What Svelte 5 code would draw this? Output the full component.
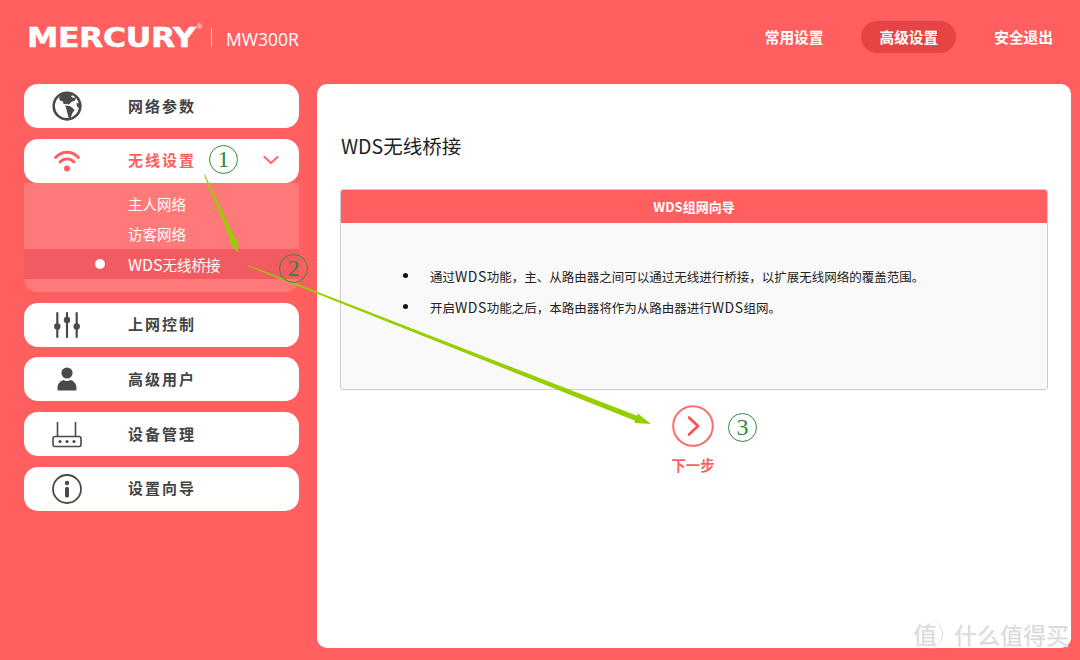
<script>
  const simple = [
    { label: '上网控制', icon: 'sliders' },
    { label: '高级用户', icon: 'user' },
    { label: '设备管理', icon: 'router' },
    { label: '设置向导', icon: 'info' }
  ];
</script>

{#snippet icon(name)}
  {#if name === 'globe'}
    <svg width="30" height="30" viewBox="0 0 32 32">
      <circle cx="16" cy="16" r="14.2" fill="#fff" stroke="#4a4a4a" stroke-width="2.8"/>
      <path d="M10 3.5 L15 2.5 L22 3 L20.5 6 L23 7.5 L26 6.5 L24.5 10 L21 11.5 L18 14.5 L15 13.5 L12.5 14 L11.5 11 L8.5 10 L7.5 7.5 Z" fill="#4a4a4a"/>
      <path d="M14 15.5 L19 16 L22 18 L24 20.5 L21.5 24 L20 28.5 L18 29 L16.5 24 L15.5 20 Z" fill="#4a4a4a"/>
      <path d="M26 13 L29 13 L29 18 L27 17 Z" fill="#4a4a4a"/>
    </svg>
  {:else if name === 'wifi'}
    <svg width="28" height="24" viewBox="0 0 28 24" fill="none" stroke="#ff5f5f" stroke-width="2.8" stroke-linecap="round">
      <path d="M2.5 8.5 C9 1.5 19 1.5 25.5 8.5"/>
      <path d="M7 13 C11 8.9 17 8.9 21 13"/>
      <circle cx="14" cy="19.5" r="3" fill="#ff5f5f" stroke="none"/>
    </svg>
  {:else if name === 'sliders'}
    <svg width="28" height="28" viewBox="0 0 28 28" fill="#4a4a4a">
      <rect x="3.2" y="1" width="2.2" height="26" rx="1"/>
      <rect x="12.9" y="1" width="2.2" height="26" rx="1"/>
      <rect x="22.6" y="1" width="2.2" height="26" rx="1"/>
      <circle cx="4.3" cy="15.5" r="3.2"/>
      <circle cx="14" cy="9" r="3.2"/>
      <circle cx="23.7" cy="15.5" r="3.2"/>
    </svg>
  {:else if name === 'user'}
    <svg width="20" height="24" viewBox="0 0 20 24" fill="#4a4a4a">
      <circle cx="10" cy="6" r="5.6"/>
      <path d="M0.5 22.5 C0.2 17 2.5 14.5 6.5 13 C8.5 14.4 11.5 14.4 13.5 13 C17.5 14.5 19.8 17 19.5 22.5 Q19.4 23.5 18.5 23.5 L1.5 23.5 Q0.6 23.5 0.5 22.5 Z"/>
    </svg>
  {:else if name === 'router'}
    <svg width="30" height="27" viewBox="0 0 30 27" fill="none" stroke="#4a4a4a" stroke-width="1.6">
      <path d="M5.5 1 V15.5 M23.5 1 V15.5"/>
      <rect x="1" y="15.5" width="28" height="10" rx="2"/>
      <circle cx="8" cy="20.5" r="1.6" fill="#4a4a4a" stroke="none"/>
      <circle cx="15" cy="20.5" r="1.6" fill="#4a4a4a" stroke="none"/>
      <circle cx="22" cy="20.5" r="1.6" fill="#4a4a4a" stroke="none"/>
    </svg>
  {:else if name === 'info'}
    <svg width="30" height="30" viewBox="0 0 30 30">
      <circle cx="15" cy="15" r="14" fill="none" stroke="#4a4a4a" stroke-width="1.8"/>
      <circle cx="15" cy="9" r="2.2" fill="#4a4a4a"/>
      <rect x="13" y="13" width="4" height="10.5" rx="1.6" fill="#4a4a4a"/>
    </svg>
  {/if}
{/snippet}

<div class="page">
  <header class="top">
    <div class="brand">
      <span class="logo">MERCURY</span>
      <span class="reg">®</span>
      <span class="sep"></span>
      <span class="model">MW300R</span>
    </div>
    <nav class="nav">
      <span class="nav-item">常用设置</span>
      <span class="nav-item active">高级设置</span>
      <span class="nav-item">安全退出</span>
    </nav>
  </header>

  <div class="body">
    <aside class="side">
      <div class="item">
        <span class="ico">{@render icon('globe')}</span>
        <span class="label">网络参数</span>
      </div>

      <div class="group">
        <div class="item open">
          <span class="ico">{@render icon('wifi')}</span>
          <span class="label">无线设置</span>
          <svg class="chev" width="16" height="10" viewBox="0 0 16 10" fill="none" stroke="#ff6a6a" stroke-width="2.2" stroke-linecap="round" stroke-linejoin="round"><path d="M1.5 2 L8 8 L14.5 2"/></svg>
        </div>
        <ul class="sub">
          <li>主人网络</li>
          <li>访客网络</li>
          <li class="current"><i class="dot"></i><span class="lat">WDS</span>无线桥接</li>
        </ul>
      </div>

      {#each simple as s}
        <div class="item">
          <span class="ico">{@render icon(s.icon)}</span>
          <span class="label">{s.label}</span>
        </div>
      {/each}
    </aside>

    <main class="panel">
      <h1>WDS无线桥接</h1>
      <section class="card">
        <div class="card-head">WDS组网向导</div>
        <ul class="card-body">
          <li>通过<span class="lat">WDS</span>功能，主、从路由器之间可以通过无线进行桥接，以扩展无线网络的覆盖范围。</li>
          <li>开启<span class="lat">WDS</span>功能之后，本路由器将作为从路由器进行<span class="lat">WDS</span>组网。</li>
        </ul>
      </section>
      <div class="next">
        <svg width="42" height="42" viewBox="0 0 42 42" fill="none">
          <circle cx="21" cy="21" r="19.8" stroke="#ff6b6b" stroke-width="2"/>
          <path d="M17 12.5 L26 21 L17 29.5" stroke="#ff4f4f" stroke-width="2.6" stroke-linecap="round" stroke-linejoin="round"/>
        </svg>
        <span>下一步</span>
      </div>
    </main>
  </div>

  <svg class="arrows" width="1080" height="660" viewBox="0 0 1080 660">
    <polygon points="204,175 205,174.8 235.4,239.3 237.4,238.4 238,253 229.2,242 231.1,241.1" fill="#96cf00"/>
    <polygon points="248,266 248.4,265.2 637.1,415.7 637.9,413.5 651,424 634.3,422.9 635.1,420.7" fill="#96cf00"/>
  </svg>
  <span class="mark m1">1</span>
  <span class="mark m2">2</span>
  <span class="mark m3">3</span>

  <div class="wm">
    <span class="wm-c">值</span>
    <span class="wm-t">什么值得买</span>
  </div>
</div>

<style>
  :global(body) { margin: 0; }
  .page {
    position: relative;
    width: 1080px;
    height: 660px;
    overflow: hidden;
    background: #ff5f5f;
    font-family: "Noto Sans CJK SC", "Liberation Sans", sans-serif;
  }
  .top {
    height: 84px;
    display: flex;
    justify-content: space-between;
    align-items: center;
    padding: 0 9px 10px 27px;
    box-sizing: border-box;
    color: #fff;
  }
  .brand { display: flex; align-items: center; margin-top: 1px; }
  .logo {
    font-family: "DejaVu Sans", sans-serif;
    font-weight: 700;
    font-size: 27px;
    line-height: 26px;
    width: 170px;
    display: inline-block;
    transform: scaleX(1.165);
    transform-origin: left center;
    letter-spacing: -0.3px;
    -webkit-text-stroke: 0.5px #fff;
  }
  .reg { font-size: 7px; align-self: flex-start; margin-top: -1px; width: 4px; font-family: "Liberation Sans", sans-serif; }
  .sep { width: 1px; height: 19px; background: #ffc4c4; margin: 0 14px 0 10px; }
  .model { font-family: "Open Sans", sans-serif; font-size: 17.5px; line-height: 24px; margin-top: 3px; }
  .nav { display: flex; gap: 20px; }
  .nav-item {
    padding: 0 18px;
    height: 32px;
    line-height: 32px;
    font-size: 14.7px;
    font-weight: 700;
    border-radius: 16px;
  }
  .nav-item.active { background: #e64444; }
  .body {
    display: flex;
    gap: 18px;
    padding-left: 24px;
  }
  .side {
    width: 275px;
    display: flex;
    flex-direction: column;
    gap: 10.8px;
  }
  .item {
    height: 44px;
    background: #fff;
    border-radius: 14px;
    display: flex;
    align-items: center;
    color: #444;
    position: relative;
  }
  .ico {
    width: 86px;
    display: flex;
    justify-content: center;
    align-items: center;
    flex: none;
  }
  .label {
    margin-left: 18px;
    padding-bottom: 2px;
    font-size: 15px;
    font-weight: 700;
    letter-spacing: 2px;
  }
  .open { color: #ff5f5f; }
  .chev { position: absolute; left: 239px; top: 16px; }
  .group { display: flex; flex-direction: column; }
  .sub {
    list-style: none;
    margin: 0;
    padding: 6px 0 13px;
    background: #ff7979;
    border-radius: 0 0 14px 14px;
    color: #fff;
    font-size: 14.5px;
  }
  .sub li {
    height: 30px;
    line-height: 30px;
    padding-left: 104px;
    position: relative;
  }
  .sub .lat { font-size: 16px; }
  .sub .current { background: #f25c60; }
  .dot {
    position: absolute;
    left: 71px;
    top: 10px;
    width: 10px;
    height: 10px;
    border-radius: 50%;
    background: #fff;
  }
  .panel {
    width: 754px;
    height: 564px;
    background: #fff;
    border-radius: 10px;
    padding: 47px 23px 0;
    box-sizing: border-box;
  }
  h1 {
    margin: 0 0 0 1px;
    font-size: 19.5px;
    font-weight: 400;
    line-height: 30px;
    color: #222;
  }
  .card {
    margin-top: 28px;
    width: 708px;
    height: 201px;
    box-sizing: border-box;
    border: 1px solid #ccc;
    border-radius: 3px;
    background: #f9f9f9;
    overflow: hidden;
    display: flex;
    flex-direction: column;
  }
  .card-head {
    height: 33px;
    line-height: 33px;
    background: #ff5f5f;
    color: #fff;
    text-align: center;
    font-size: 13px;
    font-weight: 700;
  }
  .card-body {
    list-style: none;
    margin: 0;
    padding: 38px 0 0 89px;
    font-size: 12.5px;
    color: #222;
  }
  .card-body li {
    position: relative;
    height: 31px;
    line-height: 31px;
  }
  .card-body li::before {
    content: "";
    position: absolute;
    left: -27.5px;
    top: 12px;
    width: 5px;
    height: 5px;
    border-radius: 50%;
    background: #111;
  }
  .card-body .lat { font-size: 14px; letter-spacing: 0.5px; }
  .next {
    margin-top: 15px;
    display: flex;
    flex-direction: column;
    align-items: center;
    gap: 8px;
    width: 706px;
    color: #ff5f5f;
    font-size: 14.3px;
    font-weight: 700;
    line-height: 20px;
  }
  .arrows { position: absolute; inset: 0; pointer-events: none; }
  .mark {
    position: absolute;
    width: 29px;
    height: 29px;
    box-sizing: border-box;
    border: 1px solid #2e8b3a;
    border-radius: 50%;
    color: #2e8b3a;
    font-family: "Liberation Serif", serif;
    font-size: 24px;
    line-height: 27px;
    text-align: center;
  }
  .m1 { left: 209px; top: 145px; }
  .m2 { left: 279px; top: 254px; }
  .m3 { left: 728px; top: 413px; }
  .wm {
    position: absolute;
    left: 913px;
    top: 620px;
    display: flex;
    align-items: center;
    gap: 11px;
    color: #dadada;
    text-shadow: 1px 1px 0 #f4f4f4;
  }
  .wm-c {
    width: 30px;
    height: 29px;
    box-sizing: border-box;
    border-radius: 50%;
    border-right: 1.5px solid #ddd;
    font-size: 24px;
    line-height: 27px;
    text-align: left;
  }
  .wm-t { font-size: 23px; line-height: 29px; }
</style>
